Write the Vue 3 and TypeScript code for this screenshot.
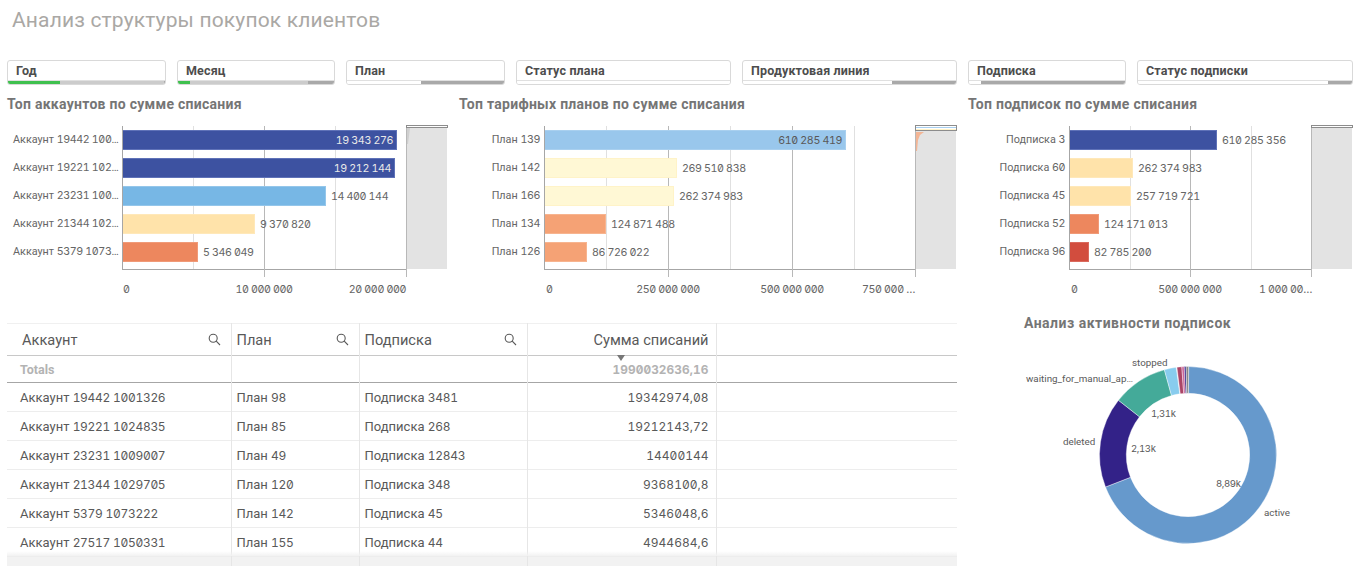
<script setup lang="ts">
interface Seg { w: number; c: string }
interface Bar { label: string; val: string; end: number; fill: string; edge: string; inside?: string }
interface Tick { x: number; major: boolean }
interface AxisLabel { x: number; t: string; align: 'l' | 'c' | 'r' }
interface Chart { title: string; axisX: number; right: number; labelW: number; cls: string; frameH: number; bars: Bar[]; ticks: Tick[]; labels: AxisLabel[]; wedge: string; wedgeFill: string; lines: { y: number; c: string }[] }

const DB = '#3d52a1', DBE = '#5f72b8'
const filters = [
  { name: 'Год', w: 159, segs: [{ w: 52, c: '#3fc04e' }, { w: 105, c: '#cccccc' }, { w: 1, c: '#a9a9a9' }] },
  { name: 'Месяц', w: 158, segs: [{ w: 12, c: '#3fc04e' }, { w: 118, c: '#cccccc' }, { w: 26, c: '#a9a9a9' }] },
  { name: 'План', w: 159, segs: [{ w: 74, c: '#ffffff' }, { w: 83, c: '#a9a9a9' }] },
  { name: 'Статус плана', w: 215, segs: [{ w: 213, c: '#ffffff' }] },
  { name: 'Продуктовая линия', w: 215, segs: [{ w: 149, c: '#ffffff' }, { w: 64, c: '#a9a9a9' }] },
  { name: 'Подписка', w: 158, segs: [{ w: 12, c: '#ffffff' }, { w: 144, c: '#a9a9a9' }] },
  { name: 'Статус подписки', w: 216, segs: [{ w: 190, c: '#ffffff' }, { w: 24, c: '#a9a9a9' }] },
] as { name: string; w: number; segs: Seg[] }[]

const charts: Chart[] = [
  {
    title: 'Топ аккаунтов по сумме списания', axisX: 122, right: 406, labelW: 115, cls: 'c1', frameH: 3,
    bars: [
      { label: 'Аккаунт 19442 100…', val: '19 343 276', end: 397, fill: DB, edge: DBE, inside: '#e8e8e8' },
      { label: 'Аккаунт 19221 102…', val: '19 212 144', end: 395, fill: DB, edge: DBE, inside: '#e8e8e8' },
      { label: 'Аккаунт 23231 100…', val: '14 400 144', end: 326, fill: '#77b7e5', edge: '#94c6ea' },
      { label: 'Аккаунт 21344 102…', val: '9 370 820', end: 255, fill: '#ffe3aa', edge: '#ffe8b9' },
      { label: 'Аккаунт 5379 1073…', val: '5 346 049', end: 198, fill: '#ed875e', edge: '#f09a78' },
    ],
    ticks: [{ x: 193, major: false }, { x: 264, major: true }, { x: 335, major: false }, { x: 406, major: true }],
    labels: [{ x: 123, t: '0', align: 'l' }, { x: 264, t: '10 000 000', align: 'c' }, { x: 406, t: '20 000 000', align: 'r' }],
    wedge: '0,2 3,2 1,18 0,18', wedgeFill: '#cfcfcf', lines: [],
  },
  {
    title: 'Топ тарифных планов по сумме списания', axisX: 544, right: 915, labelW: 85, cls: 'c2', frameH: 6,
    bars: [
      { label: 'План 139', val: '610 285 419', end: 846, fill: '#99c7ec', edge: '#a9d0ef', inside: '#595959' },
      { label: 'План 142', val: '269 510 838', end: 677, fill: '#fff8d5', edge: '#fff3c8' },
      { label: 'План 166', val: '262 374 983', end: 674, fill: '#fff8d5', edge: '#fff3c8' },
      { label: 'План 134', val: '124 871 488', end: 606, fill: '#f5a275', edge: '#f7b48f' },
      { label: 'План 126', val: '86 726 022', end: 587, fill: '#f5a275', edge: '#f7b48f' },
    ],
    ticks: [{ x: 606, major: false }, { x: 668, major: true }, { x: 730, major: false }, { x: 792, major: true }, { x: 854, major: false }, { x: 915, major: true }],
    labels: [{ x: 546, t: '0', align: 'l' }, { x: 668, t: '250 000 000', align: 'c' }, { x: 792, t: '500 000 000', align: 'c' }, { x: 915, t: '750 000 …', align: 'r' }],
    wedge: '0,6 8,6 4,9 2,14 1,25 0,25', wedgeFill: '#f3b595', lines: [{ y: 2, c: '#a9d0ef' }, { y: 4, c: '#fff3c8' }],
  },
  {
    title: 'Топ подписок по сумме списания', axisX: 1069, right: 1311, labelW: 101, cls: 'c3', frameH: 3,
    bars: [
      { label: 'Подписка 3', val: '610 285 356', end: 1217, fill: DB, edge: DBE },
      { label: 'Подписка 60', val: '262 374 983', end: 1133, fill: '#ffe3aa', edge: '#ffe8b9' },
      { label: 'Подписка 45', val: '257 719 721', end: 1131, fill: '#ffe3aa', edge: '#ffe8b9' },
      { label: 'Подписка 52', val: '124 171 013', end: 1099, fill: '#ed875e', edge: '#f09a78' },
      { label: 'Подписка 96', val: '82 785 200', end: 1089, fill: '#d24d3e', edge: '#da6a5d' },
    ],
    ticks: [{ x: 1130, major: false }, { x: 1190, major: true }, { x: 1251, major: false }, { x: 1311, major: true }],
    labels: [{ x: 1071, t: '0', align: 'l' }, { x: 1190, t: '500 000 000', align: 'c' }, { x: 1312, t: '1 000 00…', align: 'r' }],
    wedge: '', wedgeFill: 'none', lines: [],
  },
]

const rows = [
  ['Аккаунт 19442 1001326', 'План 98', 'Подписка 3481', '19342974,08'],
  ['Аккаунт 19221 1024835', 'План 85', 'Подписка 268', '19212143,72'],
  ['Аккаунт 23231 1009007', 'План 49', 'Подписка 12843', '14400144'],
  ['Аккаунт 21344 1029705', 'План 120', 'Подписка 348', '9368100,8'],
  ['Аккаунт 5379 1073222', 'План 142', 'Подписка 45', '5346048,6'],
  ['Аккаунт 27517 1050331', 'План 155', 'Подписка 44', '4944684,6'],
]

function parts(s: string) {
  return s.split(/(\d[\d ,]*\d|\d)/).filter(Boolean).map((t) => ({ t, num: /^\d/.test(t) }))
}

const CX = 220, CY = 123, RO = 88.5, RI = 61.7
function pt(r: number, deg: number) {
  const a = (deg * Math.PI) / 180
  return `${(CX + r * Math.sin(a)).toFixed(2)} ${(CY - r * Math.cos(a)).toFixed(2)}`
}
function arc(a: number, b: number) {
  const large = b - a > 180 ? 1 : 0
  return `M${pt(RO, a)}A${RO} ${RO} 0 ${large} 1 ${pt(RO, b)}L${pt(RI, b)}A${RI} ${RI} 0 ${large} 0 ${pt(RI, a)}Z`
}
const slices = [
  { a: 0.4, b: 248.8, c: '#6699cc' },
  { a: 248.8, b: 308.2, c: '#332288' },
  { a: 308.2, b: 344.5, c: '#44aa99' },
  { a: 344.5, b: 352.3, c: '#88ccee' },
  { a: 352.8, b: 356, c: '#aa4466' },
  { a: 356, b: 357.6, c: '#cc6699' },
  { a: 357.6, b: 358.8, c: '#332288' },
  { a: 358.8, b: 360.4, c: '#888888' },
].map((s) => ({ d: arc(s.a, s.b), c: s.c }))

const donutTexts = [
  { x: 164, y: 34, t: 'stopped' },
  { x: 58, y: 50, t: 'waiting_for_manual_ap…' },
  { x: 95, y: 113, t: 'deleted' },
  { x: 296, y: 184, t: 'active' },
]
const donutNums = [
  { x: 183, y: 85, t: '1,31k' },
  { x: 163, y: 120, t: '2,13k' },
  { x: 248, y: 155, t: '8,89k' },
]
</script>

<template>
  <div class="page">
    <h1 class="title">Анализ структуры покупок клиентов</h1>

    <div class="filters">
      <div v-for="f in filters" :key="f.name" class="filter" :style="{ width: f.w + 'px' }">
        <div class="fname">{{ f.name }}</div>
        <div class="fbar">
          <i v-for="(s, i) in f.segs" :key="i" :style="{ width: s.w + 'px', background: s.c }"></i>
        </div>
      </div>
    </div>

    <div class="grid">
      <section v-for="c in charts" :key="c.title" class="chart" :class="c.cls">
        <h2 class="ctitle">{{ c.title }}</h2>
        <div class="cbody">
          <div class="ylabels" :style="{ width: c.labelW + 'px' }">
            <div v-for="b in c.bars" :key="b.label" class="ylabel">
              <span v-for="(p, i) in parts(b.label)" :key="i" :class="{ num: p.num }">{{ p.t }}</span>
            </div>
          </div>
          <div class="plotwrap">
            <div class="plot" :style="{ width: c.right - c.axisX + 'px' }">
              <i
                v-for="t in c.ticks"
                :key="t.x"
                class="grid-line"
                :class="{ major: t.major }"
                :style="{ left: t.x - c.axisX - 1 + 'px' }"
              ></i>
              <div v-for="b in c.bars" :key="b.val" class="row">
                <div
                  class="bar"
                  :style="{ width: b.end - c.axisX - 1 + 'px', background: b.fill, borderColor: b.edge, color: b.inside }"
                >
                  <span v-if="b.inside" class="num">{{ b.val }}</span>
                </div>
                <span v-if="!b.inside" class="num val">{{ b.val }}</span>
              </div>
            </div>
            <div class="axis">
              <span
                v-for="l in c.labels"
                :key="l.t"
                class="num atext"
                :class="l.align"
                :style="{ left: l.x - c.axisX + 'px' }"
              >{{ l.t }}</span>
            </div>
          </div>
          <div class="mini">
            <svg v-if="c.wedge" class="wedge" width="40" height="40" viewBox="0 0 40 40">
              <polygon :points="c.wedge" :fill="c.wedgeFill" />
            </svg>
            <div class="frame" :style="{ height: c.frameH + 'px' }">
              <i v-for="l in c.lines" :key="l.y" :style="{ top: l.y - 1 + 'px', background: l.c }"></i>
            </div>
          </div>
        </div>
      </section>

      <section class="tablewrap">
        <table class="tbl">
          <colgroup>
            <col style="width: 224px" /><col style="width: 128px" /><col style="width: 168px" /><col style="width: 189px" /><col />
          </colgroup>
          <thead>
            <tr class="thead">
              <th class="first">
                <div class="th"><span>Аккаунт</span>
                  <svg width="13" height="13" viewBox="0 0 13 13"><circle cx="5.2" cy="5.2" r="4" /><path d="M8.2 8.2 12 12" /></svg>
                </div>
              </th>
              <th>
                <div class="th"><span>План</span>
                  <svg width="13" height="13" viewBox="0 0 13 13"><circle cx="5.2" cy="5.2" r="4" /><path d="M8.2 8.2 12 12" /></svg>
                </div>
              </th>
              <th>
                <div class="th"><span>Подписка</span>
                  <svg width="13" height="13" viewBox="0 0 13 13"><circle cx="5.2" cy="5.2" r="4" /><path d="M8.2 8.2 12 12" /></svg>
                </div>
              </th>
              <th class="r">Сумма списаний</th>
              <th></th>
            </tr>
            <tr class="totals">
              <td class="first">Totals</td>
              <td></td>
              <td></td>
              <td class="r tot"><i class="sort"></i><span class="num">1990032636,16</span></td>
              <td></td>
            </tr>
          </thead>
          <tbody>
            <tr v-for="r in rows" :key="r[0]" class="drow">
              <td class="first"><span v-for="(p, i) in parts(r[0])" :key="i" :class="{ num: p.num }">{{ p.t }}</span></td>
              <td><span v-for="(p, i) in parts(r[1])" :key="i" :class="{ num: p.num }">{{ p.t }}</span></td>
              <td><span v-for="(p, i) in parts(r[2])" :key="i" :class="{ num: p.num }">{{ p.t }}</span></td>
              <td class="r"><span class="num">{{ r[3] }}</span></td>
              <td></td>
            </tr>
            <tr class="fade"><td></td><td></td><td></td><td></td><td></td></tr>
          </tbody>
        </table>
        <div class="shade"></div>
      </section>

      <section class="donut">
        <h2 class="ctitle dtitle">Анализ активности подписок</h2>
        <svg class="dsvg" width="389" height="230" viewBox="0 0 389 230">
          <path v-for="(s, i) in slices" :key="i" :d="s.d" :fill="s.c" stroke="#fff" stroke-width="0.4" />
          <text v-for="t in donutTexts" :key="t.t" :x="t.x" :y="t.y" class="dtext">{{ t.t }}</text>
          <text v-for="t in donutNums" :key="t.t" :x="t.x" :y="t.y" class="dtext dnum">{{ t.t }}</text>
        </svg>
      </section>
    </div>
  </div>
</template>

<style>
html, body { margin: 0; background: #fff; }
</style>

<style scoped>
.page {
  width: 1357px;
  height: 569px;
  overflow: hidden;
  background: #fff;
  font-family: Roboto, "Noto Sans", sans-serif;
  color: #595959;
}
.title {
  margin: 0;
  height: 60px;
  padding: 6px 0 0 12px;
  box-sizing: border-box;
  font-size: 21px;
  line-height: 28px;
  font-weight: 400;
  color: #aaa8a5;
  letter-spacing: 0.15px;
}
.filters { display: flex; gap: 11px; padding-left: 7px; height: 25px; }
.filter {
  box-sizing: border-box;
  height: 25px;
  border: 1px solid #d9d9d9;
  border-radius: 3px;
  background: #fff;
  display: flex;
  flex-direction: column;
  overflow: hidden;
}
.fname {
  flex: 1;
  padding: 1px 0 0 8px;
  font-size: 12.5px;
  font-weight: 700;
  line-height: 18px;
  color: #4d4d4d;
  letter-spacing: 0.15px;
}
.fbar { display: flex; height: 5px; border-top: 1px solid #e0e0e0; }
.fbar i { display: block; height: 100%; }
.grid {
  display: grid;
  grid-template-columns: 452px 509px 389px;
  grid-template-rows: 238px 1fr;
  padding-left: 7px;
}
.chart { padding-top: 10px; }
.ctitle {
  margin: 0;
  font-size: 14px;
  line-height: 18px;
  font-weight: 700;
  color: #757575;
  letter-spacing: 0.28px;
}
.cbody { display: flex; margin-top: 13px; align-items: flex-start; }
.ylabels {
  box-sizing: border-box;
  padding-top: 4px;
  display: flex;
  flex-direction: column;
  gap: 8px;
}
.ylabel {
  height: 20px;
  line-height: 20px;
  padding-right: 4px;
  text-align: right;
  white-space: nowrap;
  font-size: 10.8px;
  color: #666;
}
.ylabel .num { font-size: 10.7px; letter-spacing: -0.4px; }
.c1 .ylabel { text-align: left; padding: 0 0 0 6px; }
.plotwrap { display: flex; flex-direction: column; }
.plot {
  position: relative;
  box-sizing: content-box;
  height: 139px;
  padding-top: 4px;
  border-left: 1px solid #a6a6a6;
  border-bottom: 1px solid #a6a6a6;
  display: flex;
  flex-direction: column;
  gap: 8px;
}
.grid-line {
  position: absolute;
  top: 0;
  bottom: 0;
  width: 1px;
  background: #e0e0e0;
}
.grid-line.major { background: #b8b8b8; bottom: -8px; }
.row { position: relative; height: 20px; display: flex; align-items: center; gap: 5px; }
.bar {
  box-sizing: border-box;
  height: 20px;
  border: 1px solid;
  border-left: 0;
  display: flex;
  align-items: center;
  justify-content: flex-end;
  padding-right: 3px;
  font-size: 11.5px;
}
.num {
  font-family: Inter, Roboto, sans-serif;
  font-feature-settings: "zero", "tnum";
  font-size: 10.7px;
  letter-spacing: -0.4px;
}
.val { color: #666; white-space: nowrap; }
.axis { position: relative; height: 32px; }
.atext {
  position: absolute;
  top: 12px;
  line-height: 16px;
  white-space: nowrap;
  color: #666;
}
.atext.c { transform: translateX(-50%); }
.atext.r { transform: translateX(-100%); }
.mini { position: relative; width: 40px; height: 143px; background: #e3e3e3; }
.wedge { position: absolute; left: 0; top: 0; }
.frame {
  position: absolute;
  box-sizing: border-box;
  left: -1px;
  top: -1px;
  width: 42px;
  border: 1px solid #8c8c8c;
  background: #fff;
}
.frame i { position: absolute; left: 0; right: 0; height: 1px; }
.tablewrap { grid-column: 1 / 3; position: relative; width: 950px; }
.tbl {
  width: 950px;
  table-layout: fixed;
  border-collapse: collapse;
  font-size: 13px;
  color: #595959;
}
.tbl th, .tbl td {
  padding: 0 0 0 5px;
  border-right: 1px solid #e6e6e6;
  white-space: nowrap;
  box-sizing: border-box;
}
.tbl th:last-child, .tbl td:last-child { border-right: 0; }
.tbl .first { padding-left: 13px; }
.tbl .r { text-align: right; padding: 0 7px 0 0; }
.tbl .num { font-size: 12px; letter-spacing: -0.3px; }
.tbl .r .num { letter-spacing: 0; }
.thead { height: 32px; border-top: 1px solid #f0f0f0; border-bottom: 1px solid #c8c8c8; }
.thead th { font-size: 14.6px; font-weight: 400; color: #595959; }
.th { display: flex; align-items: center; justify-content: space-between; padding-right: 10px; }
.first .th { padding-left: 2px; }
.th svg { fill: none; stroke: #595959; stroke-width: 1.1; }
.totals { height: 27px; border-bottom: 1px solid #a6a6a6; color: #b3b3b3; font-weight: 700; font-size: 12.5px; }
.tot { position: relative; }
.tbl .tot .num { font-weight: 700; font-size: 11.8px; letter-spacing: 0.1px; }
.sort {
  position: absolute;
  left: 89px;
  top: -1px;
  border: 4.5px solid transparent;
  border-top: 6px solid #777;
  border-bottom: 0;
}
.drow { height: 29px; border-bottom: 1px solid #ededed; }
.fade { height: 9px; background: #f2f2f2; }
.shade {
  position: absolute;
  left: 0;
  right: 0;
  top: 228px;
  height: 5px;
  background: linear-gradient(rgba(242, 242, 242, 0), #f2f2f2);
  pointer-events: none;
}
.donut { position: relative; }
.dtitle { padding: 0 0 0 56px; line-height: 18px; margin-top: -9px; letter-spacing: 0.5px; }
.dsvg { display: block; }
.dtext { font-size: 9.8px; fill: #595959; font-family: Roboto, sans-serif; }
.dnum { font-family: Inter, Roboto, sans-serif; font-feature-settings: "zero", "tnum"; font-size: 9.6px; letter-spacing: -0.4px; }
</style>
